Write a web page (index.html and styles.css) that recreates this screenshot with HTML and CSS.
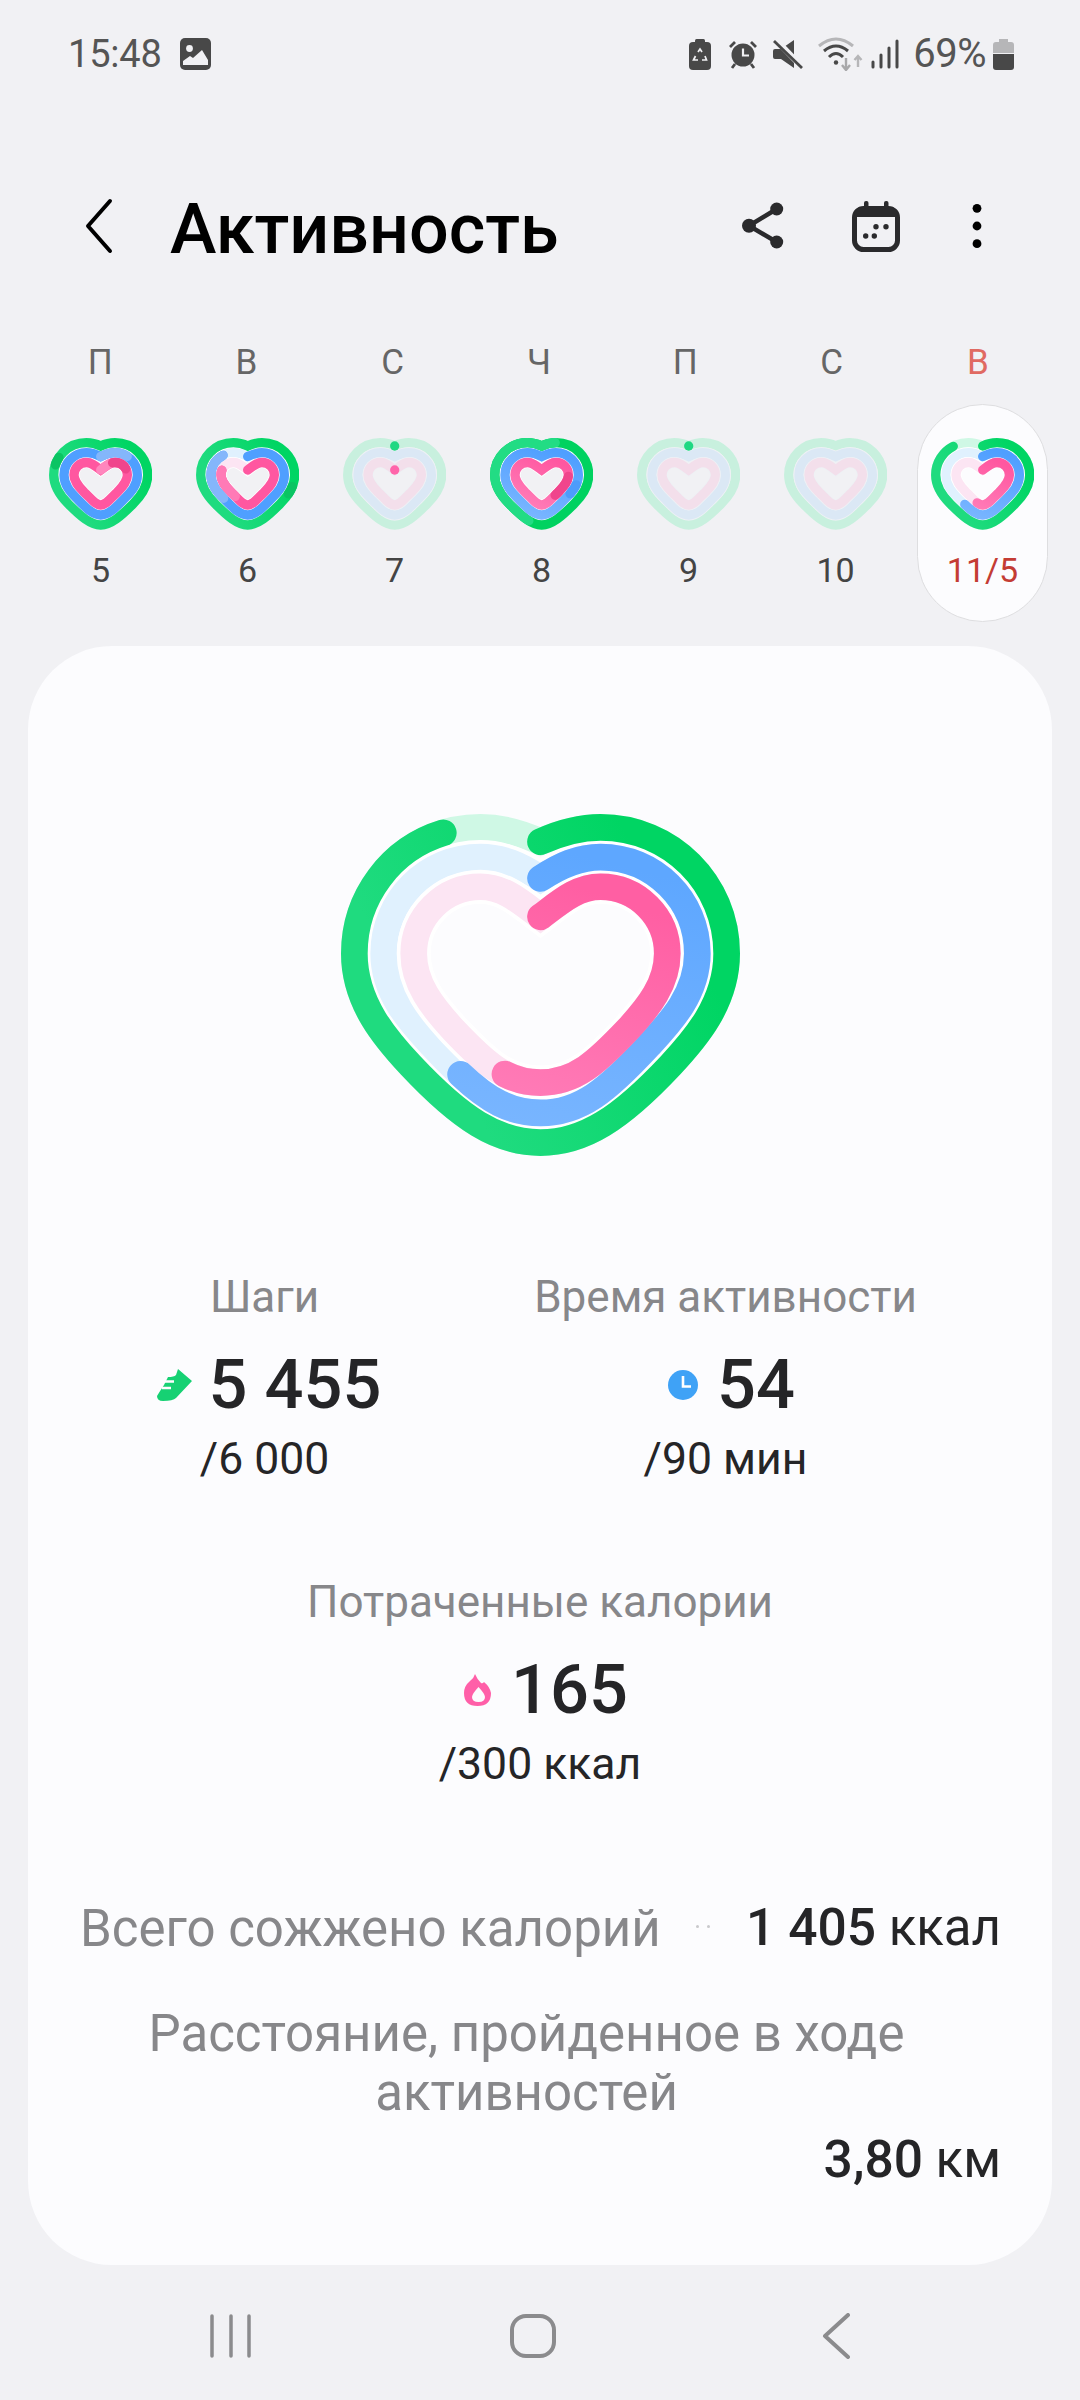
FILE: index.html
```html
<!DOCTYPE html>
<html lang="ru">
<head>
<meta charset="utf-8">
<title>Активность</title>
<link rel="stylesheet" href="styles.css">
</head>
<body>
<svg class="defs" aria-hidden="true">
  <defs>
    <linearGradient id="gg" gradientUnits="userSpaceOnUse" x1="900" y1="100" x2="200" y2="500"><stop offset="0" stop-color="#00d563"/><stop offset="1" stop-color="#1fdb7f"/></linearGradient>
    <linearGradient id="gb" gradientUnits="userSpaceOnUse" x1="800" y1="200" x2="600" y2="1000"><stop offset="0" stop-color="#5ea7ff"/><stop offset="1" stop-color="#78b5ff"/></linearGradient>
    <linearGradient id="gp" gradientUnits="userSpaceOnUse" x1="800" y1="300" x2="600" y2="900"><stop offset="0" stop-color="#ff5fa3"/><stop offset="1" stop-color="#ff7ab6"/></linearGradient>
    <linearGradient id="mgg" gradientUnits="userSpaceOnUse" x1="80" y1="5" x2="15" y2="40"><stop offset="0" stop-color="#00d563"/><stop offset="1" stop-color="#1fdb7f"/></linearGradient>
    <linearGradient id="mgb" gradientUnits="userSpaceOnUse" x1="70" y1="15" x2="50" y2="80"><stop offset="0" stop-color="#4f9fff"/><stop offset="1" stop-color="#78b5ff"/></linearGradient>
    <linearGradient id="mgp" gradientUnits="userSpaceOnUse" x1="70" y1="25" x2="50" y2="70"><stop offset="0" stop-color="#ff57a0"/><stop offset="1" stop-color="#ff7ab6"/></linearGradient>
    <path id="g" class="ring" pathLength="100" d="M660 155C715 130 770 112 840 112C1050 112 1218 280 1218 490C1218 640 1120 750 1050 825C900 985 790 1057 660 1057C530 1057 420 985 270 825C200 750 102 640 102 490C102 280 270 112 480 112C550 112 605 130 660 155Z"/>
    <path id="b" class="ring" pathLength="100" d="M660 265C720 225 775 201 840 201C1000 201 1130 330 1130 490C1130 610 1050 695 985 765C860 900 780 968 660 968C540 968 460 900 335 765C270 695 190 610 190 490C190 330 320 201 480 201C545 201 600 225 660 265Z"/>
    <path id="p" class="ring" pathLength="100" d="M660 380C720 335 770 290 840 290C950 290 1040 380 1040 490C1040 580 985 650 920 720C830 815 765 877 660 877C555 877 490 815 400 720C335 650 280 580 280 490C280 380 370 290 480 290C550 290 600 335 660 380Z"/>
    <path id="mg" class="mring" pathLength="100" d="M51.700 8C56 6 60 4.700 66 4.700C84 4.700 98.700 19 98.700 37C98.700 50 90 60 84 66C72 78 62 87 51.700 87C41.400 87 31.400 78 19.400 66C13.400 60 4.700 50 4.700 37C4.700 19 19.400 4.700 37.400 4.700C43.400 4.700 47.400 6 51.700 8Z"/>
    <path id="mb" class="mring" pathLength="100" d="M51.700 18.500C57 16 61 14.700 66 14.700C78 14.700 88.400 24.500 88.400 37C88.400 47 82 54 76 60C66 70 60 77 51.700 77C43.400 77 37.400 70 27.400 60C21.400 54 15 47 15 37C15 24.500 25.400 14.700 37.400 14.700C42.400 14.700 46.400 16 51.700 18.500Z"/>
    <path id="mp" class="mring" pathLength="100" d="M51.700 32C57 28 61 24.500 66 24.500C73 24.500 78.400 30 78.400 37C78.400 44 73 49 68 54.500C61 61 57 67 51.700 67C46.400 67 42.400 61 35.400 54.500C30.400 49 25 44 25 37C25 30 30.400 24.500 37.400 24.500C42.400 24.500 46.400 28 51.700 32Z"/>
    <g id="tracks">
      <use href="#g" class="t-g"/>
      <use href="#b" class="halo"/>
      <use href="#b" class="t-b"/>
      <use href="#p" class="halo"/>
      <use href="#p" class="t-p"/>
    </g>
    <g id="mtracks">
      <use href="#mg" class="t-g"/>
      <use href="#mb" class="mhalo"/>
      <use href="#mb" class="t-b"/>
      <use href="#mp" class="mhalo"/>
      <use href="#mp" class="t-p"/>
    </g>
  </defs>
</svg>

<header class="status">
  <div class="status-side">
    <span class="clock">15:48</span>
    <svg class="ic" width="31" height="32" viewBox="0 0 31 32"><rect x="0" y="0" width="31" height="32" rx="5" fill="#484848"/><circle cx="9.5" cy="10.5" r="3.4" fill="#f1f1f4"/><path d="M3 24L3 23L10 18L13 20L22 12L28 22V27H3Z" fill="#f1f1f4"/></svg>
  </div>
  <div class="status-side right">
    <svg class="ic" width="22" height="31" viewBox="0 0 22 31"><rect x="6" y="0" width="10" height="5" rx="1.5" fill="#484848"/><rect x="0" y="3" width="22" height="28" rx="4" fill="#484848"/><path d="M9 13L11 10L13 13M16 17L17.500 21H13M9 21H4.500L6.500 17" fill="none" stroke="#f1f1f4" stroke-width="1.700"/></svg>
    <svg class="ic alarm" width="30" height="29" viewBox="0 0 30 29"><circle cx="15" cy="15" r="11.500" fill="#484848"/><path d="M15 8.500V15.500H21" fill="none" stroke="#f1f1f4" stroke-width="2.200"/><path d="M2 7L7 2M28 7L23 2M7 24L4 28M23 24L26 28" stroke="#484848" stroke-width="2.800" fill="none"/></svg>
    <svg class="ic mute" width="30" height="29" viewBox="0 0 30 29"><path d="M0 11Q0 9 2 9H8L21 0V28L8 19H2Q0 19 0 17Z" fill="#484848"/><path d="M3 0L30 28" stroke="#f1f1f4" stroke-width="6"/><path d="M1 1L29 28" stroke="#484848" stroke-width="2.800"/></svg>
    <svg class="ic wifi" width="46" height="34" viewBox="0 0 46 34"><path d="M2 9Q19 -5 36 9" fill="none" stroke="#b6b6b8" stroke-width="3"/><path d="M7 14Q19 4 31 14" fill="none" stroke="#484848" stroke-width="3"/><path d="M12 20Q19 13 26 20" fill="none" stroke="#484848" stroke-width="3"/><circle cx="19" cy="25.500" r="2.200" fill="#484848"/><path d="M29 21V33M25 28L29 33L33 28" fill="none" stroke="#a8a8aa" stroke-width="2.400"/><path d="M41 30V19M37.500 23L41 19L44.500 23" fill="none" stroke="#b6b6b8" stroke-width="2.400"/></svg>
    <svg class="ic signal" width="28" height="30" viewBox="0 0 28 30"><path d="M2 28V23M10 28V16M18 28V9M26 28V2" fill="none" stroke="#484848" stroke-width="3" stroke-linecap="round"/></svg>
    <span class="pct">69%</span>
    <svg class="ic batt" width="21" height="31" viewBox="0 0 21 31"><path d="M6 0H15V3H18Q21 3 21 6V14H0V6Q0 3 3 3H6Z" fill="#b6b6b8"/><path d="M0 15H21V28Q21 31 18 31H3Q0 31 0 28Z" fill="#484848"/></svg>
  </div>
</header>

<nav class="appbar">
  <svg class="back" width="30" height="56" viewBox="0 0 30 56"><path d="M26 3L4 28L26 53" fill="none" stroke="#000" stroke-width="4" stroke-linecap="round" stroke-linejoin="round"/></svg>
  <h1 class="title">Активность</h1>
  <div class="actions">
    <svg class="act-share" width="50" height="50" viewBox="0 0 50 50" fill="#2a2a2c"><path d="M37.700 8L10 24.700L37.700 41" fill="none" stroke="#2a2a2c" stroke-width="4.500"/><circle cx="37.700" cy="8" r="6.500"/><circle cx="10" cy="24.700" r="7"/><circle cx="37.700" cy="41" r="6.500"/></svg>
    <svg class="act-cal" width="50" height="52" viewBox="0 0 50 52" fill="#2a2a2c"><rect x="3.500" y="8.500" width="43" height="41" rx="9" fill="none" stroke="#2a2a2c" stroke-width="5"/><path d="M3 16Q3 7 12 7H38Q47 7 47 16V17H3Z"/><rect x="13" y="1" width="4.500" height="8" rx="2"/><rect x="33" y="1" width="4.500" height="8" rx="2"/><circle cx="25" cy="26.700" r="2.700"/><circle cx="35" cy="26.700" r="2.700"/><circle cx="14.700" cy="36" r="2.700"/><circle cx="23.300" cy="36" r="2.700"/></svg>
    <svg class="act-more" width="46" height="50" viewBox="0 0 46 50" fill="#000"><circle cx="23" cy="7.300" r="4.400"/><circle cx="23" cy="25" r="4.400"/><circle cx="23" cy="42.700" r="4.400"/></svg>
  </div>
</nav>

<section class="week">
  <div class="dows">
    <div class="dow">П</div>
    <div class="dow">В</div>
    <div class="dow">С</div>
    <div class="dow">Ч</div>
    <div class="dow">П</div>
    <div class="dow">С</div>
    <div class="dow sun">В</div>
  </div>
  <div class="days">
    <div class="day-body">
      <svg class="heart mini" viewBox="0 0 103.400 92"><use href="#mtracks"/><use href="#mg" stroke="url(#mgg)"/><use href="#mb" stroke="#4f9fff"/><use href="#mb" stroke="#84b6fb" stroke-dasharray="13 87"/><use href="#mp" stroke="#ff57a0"/><use href="#mp" stroke="#ff86bd" stroke-dasharray="8 92"/><use href="#mp" stroke="#f0458c" stroke-dasharray="10 90" stroke-dashoffset="-9"/><use href="#mg" stroke="#0bc463" stroke-dasharray="3 97" stroke-dashoffset="-80"/></svg>
      <div class="dnum">5</div>
    </div>
    <div class="day-body">
      <svg class="heart mini" viewBox="0 0 103.400 92"><use href="#mtracks"/><use href="#mg" stroke="url(#mgg)"/><use href="#mb" stroke="#4f9fff" stroke-dasharray="88 100"/><use href="#mb" stroke="#84b6fb" stroke-dasharray="24 76" stroke-dashoffset="-64"/><use href="#mp" stroke="#ff57a0" stroke-dasharray="80 100"/><use href="#mp" stroke="#ff7ab6" stroke-dasharray="20 80" stroke-dashoffset="-60"/><use href="#mg" stroke="#0bc463" stroke-dasharray="3 97" stroke-dashoffset="-28"/></svg>
      <div class="dnum">6</div>
    </div>
    <div class="day-body">
      <svg class="heart mini faded" viewBox="0 0 103.400 92"><use href="#mtracks"/><use href="#mg" stroke="#1fd882" stroke-dasharray="0 100"/><use href="#mp" stroke="#ff65aa" stroke-dasharray="0 100"/></svg>
      <div class="dnum">7</div>
    </div>
    <div class="day-body">
      <svg class="heart mini" viewBox="0 0 103.400 92"><use href="#mtracks"/><use href="#mg" stroke="#00d260"/><use href="#mg" stroke="#22dc84" stroke-dasharray="50 50" stroke-dashoffset="-55"/><use href="#mg" stroke="#22dc84" stroke-dasharray="5 95"/><use href="#mb" stroke="url(#mgb)"/><use href="#mb" stroke="#4d9cfb" stroke-dasharray="5 95" stroke-dashoffset="-28"/><use href="#mp" stroke="url(#mgp)"/><use href="#mp" stroke="#f0458c" stroke-dasharray="15 85" stroke-dashoffset="-24"/></svg>
      <div class="dnum">8</div>
    </div>
    <div class="day-body">
      <svg class="heart mini faded" viewBox="0 0 103.400 92"><use href="#mtracks"/><use href="#mg" stroke="#1fd882" stroke-dasharray="0 100"/></svg>
      <div class="dnum">9</div>
    </div>
    <div class="day-body">
      <svg class="heart mini faded" viewBox="0 0 103.400 92"><use href="#mtracks"/></svg>
      <div class="dnum">10</div>
    </div>
    <div class="day-body today">
      <svg class="heart mini" viewBox="0 0 103.400 92"><use href="#mtracks"/><use href="#mg" stroke="url(#mgg)" stroke-dasharray="89 100"/><use href="#mb" stroke="url(#mgb)" stroke-dasharray="60 100"/><use href="#mp" stroke="url(#mgp)" stroke-dasharray="54 100"/></svg>
      <div class="dnum">11/5</div>
    </div>
  </div>
</section>

<main class="card">
  <svg class="heart big" viewBox="62 72 1196 1025"><use href="#tracks"/><use href="#g" stroke="url(#gg)" stroke-dasharray="90.800 100"/><use href="#b" stroke="url(#gb)" stroke-dasharray="60 100"/><use href="#p" stroke="url(#gp)" stroke-dasharray="55 100"/></svg>

  <div class="stats-two">
    <div class="stat">
      <div class="stat-label">Шаги</div>
      <div class="stat-value steps">
        <svg class="stat-ic" width="36" height="33" viewBox="0 0 36 33"><path d="M21 0L35 12L19 29Q16 32 6 32Q0 32 0 27Q3 22 7 16L11 8Q17 8 19 6Z" fill="#16d173"/><path d="M8 12.500H17M5 19H14" stroke="#fcfcfe" stroke-width="2.500"/></svg>
        <span>5 455</span>
      </div>
      <div class="stat-goal">/6 000</div>
    </div>
    <div class="stat">
      <div class="stat-label">Время активности</div>
      <div class="stat-value">
        <svg class="stat-ic" width="30" height="30" viewBox="0 0 30 30"><circle cx="15" cy="15" r="15" fill="#3fa2f6"/><path d="M15 6V16.500H23" fill="none" stroke="#fff" stroke-width="2.600"/></svg>
        <span>54</span>
      </div>
      <div class="stat-goal">/90 мин</div>
    </div>
  </div>

  <div class="stat single">
    <div class="stat-label">Потраченные калории</div>
    <div class="stat-value">
      <svg class="stat-ic" width="28" height="33" viewBox="0 0 28 33"><path d="M11 0Q13 5 17 9Q18.500 10 20 8Q26 13 27 19Q27 32 13.500 32Q0 32 0 19Q0 12 6 7Q10 4 11 0Z" fill="#ff5fa8"/><path d="M14.500 13Q21 20 21 23Q21 28 14.500 28Q8 28 8 23Q8 20 14.500 13Z" fill="#fcfcfe"/></svg>
      <span>165</span>
    </div>
    <div class="stat-goal">/300 ккал</div>
  </div>

  <div class="metric">
    <span class="metric-label">Всего сожжено калорий</span>
    <span class="sep"><i></i><i></i></span>
    <span class="metric-val"><b>1 405</b> ккал</span>
  </div>
  <div class="metric-wrap">
    <div class="metric-label centered">Расстояние, пройденное в ходе активностей</div>
    <div class="metric-val end"><b>3,80</b> км</div>
  </div>
</main>

<footer class="navbar">
  <svg width="60" height="46" viewBox="0 0 60 46"><path d="M11 3V43M30 3V43M48 3V43" stroke="#8b8b8d" stroke-width="3.500" fill="none" stroke-linecap="round"/></svg>
  <svg width="60" height="46" viewBox="0 0 60 46"><rect x="9" y="3" width="42" height="40" rx="14" fill="none" stroke="#8b8b8d" stroke-width="4"/></svg>
  <svg width="60" height="46" viewBox="0 0 60 46"><path d="M43 2L20 23L43 44" fill="none" stroke="#8b8b8d" stroke-width="4" stroke-linecap="round" stroke-linejoin="round"/></svg>
</footer>
</body>
</html>
```

FILE: styles.css
```css
* { box-sizing: border-box; }
html, body { margin: 0; padding: 0; }
body {
  width: 1080px;
  height: 2400px;
  overflow: hidden;
  background: #f1f1f4;
  font-family: Roboto, "Noto Sans", sans-serif;
  color: #252527;
  display: flex;
  flex-direction: column;
}
.defs { display: block; width: 0; height: 0; overflow: hidden; }

/* status bar */
.status {
  height: 108px;
  padding: 0 66px 0 68px;
  display: flex;
  align-items: center;
  justify-content: space-between;
  color: #555;
}
.status-side { display: flex; align-items: center; gap: 18px; }
.status-side.right { gap: 0; }
.ic { display: block; flex: none; }
.clock { font-size: 38px; letter-spacing: -0.2px; line-height: 44px; }
.pct { font-size: 40px; line-height: 44px; margin: 0 7px 0 14px; letter-spacing: -0.5px; }
.alarm { margin-left: 17px; }
.mute { margin-left: 15px; }
.wifi { margin-left: 14px; }
.signal { margin-left: 8px; }

/* app bar */
.appbar {
  margin-top: 58px;
  height: 120px;
  padding-left: 84px;
  display: flex;
  align-items: center;
}
.back { display: block; flex: none; }
.title {
  margin: 5px 0 0 56px;
  font-size: 70px;
  font-weight: 500;
  color: #000;
  line-height: 80px;
}
.actions {
  margin-left: auto;
  padding-right: 80px;
  display: flex;
  align-items: center;
}
.actions svg { display: block; }
.act-cal { margin-left: 62px; }
.act-more { margin-left: 53px; }

/* week strip */
.week { margin-top: 57px; }
.dows {
  padding-left: 27px;
  display: grid;
  grid-template-columns: repeat(7, 146.3px);
}
.dow {
  height: 40px;
  font-size: 35px;
  line-height: 40px;
  color: #666;
  text-align: center;
}
.dow.sun { color: #e06a62; }
.days {
  margin-top: 21px;
  padding-left: 27px;
  display: grid;
  grid-template-columns: repeat(7, 147px);
  justify-items: center;
}
.day-body {
  width: 131px;
  height: 218px;
  padding-top: 33px;
  border: 1px solid transparent;
  border-radius: 66px;
  display: flex;
  flex-direction: column;
  align-items: center;
}
.dnum {
  margin-top: 20px;
  font-size: 34px;
  line-height: 40px;
  color: #444;
}
.today { background: #fcfcfe; border-color: #dedee0; }
.today .dnum { color: #c43c34; }

/* hearts */
.heart {
  display: block;
  flex: none;
  fill: none;
  stroke-linecap: round;
  --tg: #cff8e5;
  --tb: #e0f1fe;
  --tp: #fce5f3;
  --hl: #ffffff;
}
.ring { stroke-width: var(--w, 80); }
.mring { stroke-width: var(--w, 9.3); }
.t-g { stroke: var(--tg); }
.t-b { stroke: var(--tb); }
.t-p { stroke: var(--tp); }
.halo { --w: 102; stroke: var(--hl); }
.mhalo { --w: 11; stroke: var(--hl); }
.mini { width: 103.4px; height: 92px; }
.faded { --tg: #c8f0de; --tb: #dbe8f5; --tp: #f3dfeb; --hl: #eef1f5; }
.big { width: 399px; height: 342px; }

/* main card */
.card {
  margin: 24px 28px 0;
  height: 1619px;
  padding-top: 168px;
  background: #fcfcfe;
  border-radius: 84px;
  display: flex;
  flex-direction: column;
  align-items: center;
}
.stats-two {
  margin-top: 111px;
  width: 100%;
  padding-left: 6px;
  display: grid;
  grid-template-columns: repeat(2, 461px);
}
.stat { display: flex; flex-direction: column; align-items: center; }
.single { margin-top: 85px; }
.stat-label { font-size: 44px; line-height: 60px; color: #87878a; white-space: nowrap; }
.stat-value {
  margin-top: 13px;
  height: 90px;
  padding-left: 12px;
  display: flex;
  align-items: center;
  gap: 19px;
  font-size: 68.5px;
  font-weight: 500;
  line-height: 90px;
}
.stat-value.steps { padding-left: 9px; gap: 16px; }
.stat-goal { margin-top: 1px; font-size: 44.5px; line-height: 56px; }

.metric {
  margin-top: 106px;
  width: 100%;
  padding: 0 51px 0 52px;
  height: 60px;
  display: flex;
  align-items: center;
  justify-content: space-between;
}
.metric-label { font-size: 51px; line-height: 59px; color: #87878a; }
.metric-val { font-size: 51px; line-height: 60px; color: #252527; }
.metric-val b { font-size: 51.5px; font-weight: 500; }
.sep { display: flex; gap: 8px; margin-top: -4px; }
.sep i { display: block; width: 3px; height: 3px; border-radius: 50%; background: #c9c9cc; }
.metric-wrap {
  margin-top: 46px;
  width: 100%;
  padding: 0 51px 0 52px;
  display: flex;
  flex-direction: column;
}
.centered { text-align: center; padding: 0 74px 0 46px; }
.end { align-self: flex-end; margin-top: 8px; }

/* nav bar */
.navbar {
  flex: 1;
  padding: 6px 0 0 201px;
  display: grid;
  grid-template-columns: 302px 302px 60px;
  align-items: center;
}
.navbar svg { display: block; }
```
